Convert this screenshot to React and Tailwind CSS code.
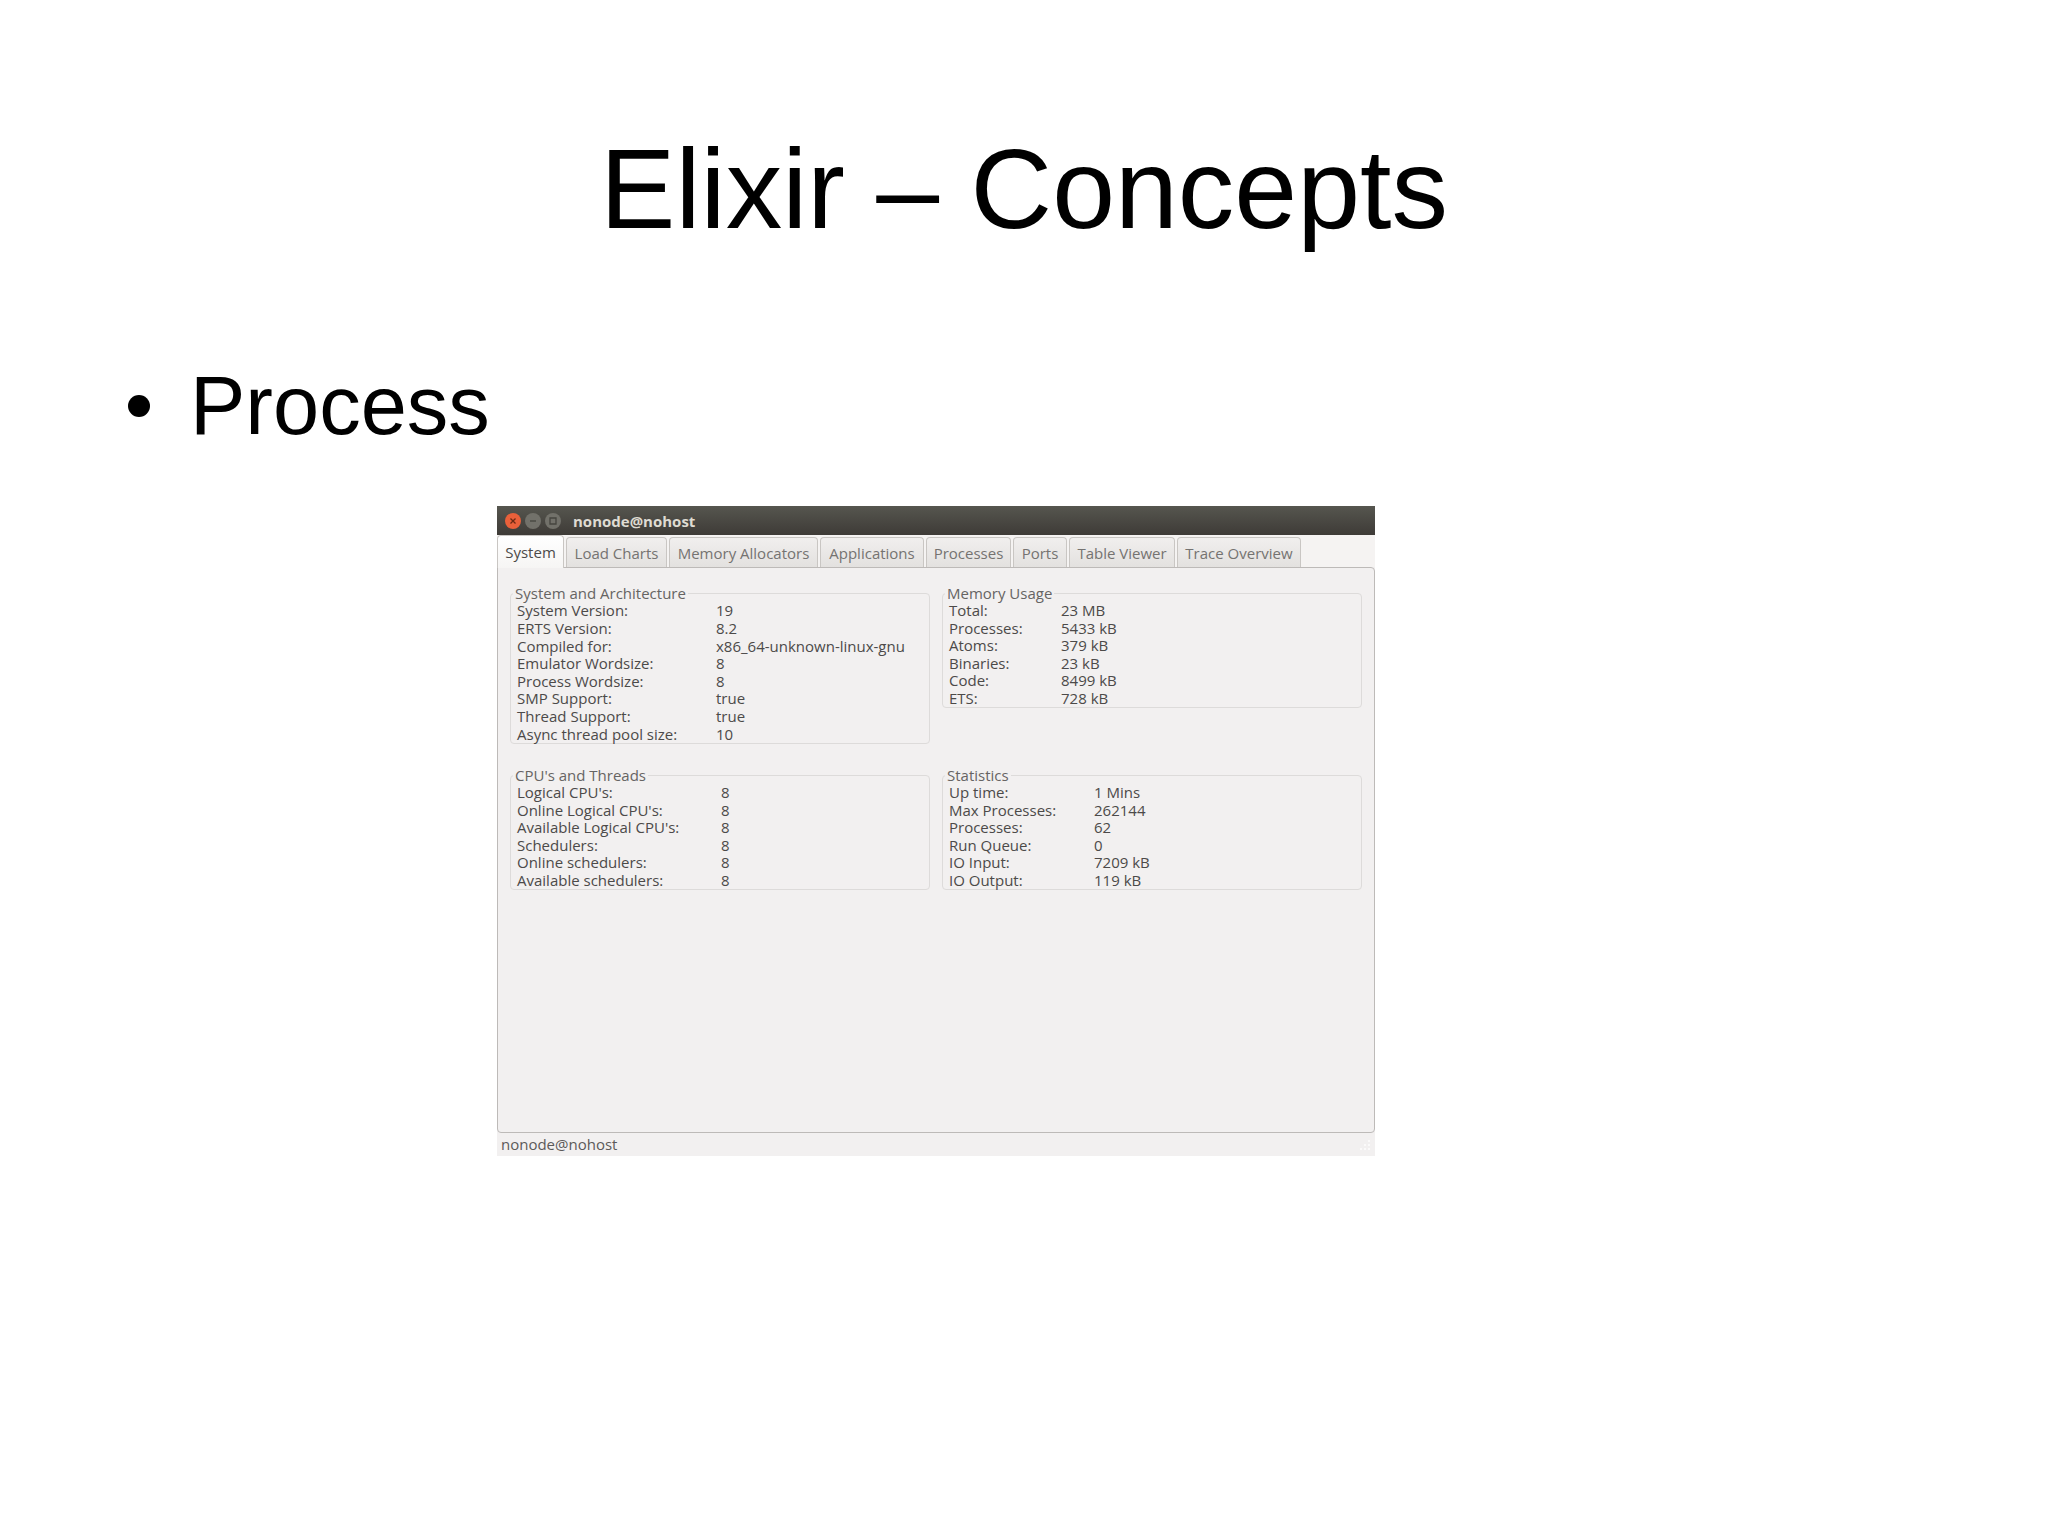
import { useState } from 'react'

const tabs = [
  { name: 'System', width: 'w-[67px]' },
  { name: 'Load Charts', width: 'w-[101px]' },
  { name: 'Memory Allocators', width: 'w-[149px]' },
  { name: 'Applications', width: 'w-[104px]' },
  { name: 'Processes', width: 'w-[85px]' },
  { name: 'Ports', width: 'w-[54px]' },
  { name: 'Table Viewer', width: 'w-[106px]' },
  { name: 'Trace Overview', width: 'w-[124px]' },
]

const groups = [
  {
    title: 'System and Architecture',
    labelWidth: 'w-[199px]',
    height: 'h-[141px]',
    rows: [
      ['System Version:', '19'],
      ['ERTS Version:', '8.2'],
      ['Compiled for:', 'x86_64-unknown-linux-gnu'],
      ['Emulator Wordsize:', '8'],
      ['Process Wordsize:', '8'],
      ['SMP Support:', 'true'],
      ['Thread Support:', 'true'],
      ['Async thread pool size:', '10'],
    ],
  },
  {
    title: 'Memory Usage',
    labelWidth: 'w-[112px]',
    height: 'h-[105px]',
    rows: [
      ['Total:', '23 MB'],
      ['Processes:', '5433 kB'],
      ['Atoms:', '379 kB'],
      ['Binaries:', '23 kB'],
      ['Code:', '8499 kB'],
      ['ETS:', '728 kB'],
    ],
  },
  {
    title: "CPU's and Threads",
    labelWidth: 'w-[204px]',
    height: 'h-[105px]',
    rows: [
      ["Logical CPU's:", '8'],
      ["Online Logical CPU's:", '8'],
      ["Available Logical CPU's:", '8'],
      ['Schedulers:', '8'],
      ['Online schedulers:', '8'],
      ['Available schedulers:', '8'],
    ],
  },
  {
    title: 'Statistics',
    labelWidth: 'w-[145px]',
    height: 'h-[105px]',
    rows: [
      ['Up time:', '1 Mins'],
      ['Max Processes:', '262144'],
      ['Processes:', '62'],
      ['Run Queue:', '0'],
      ['IO Input:', '7209 kB'],
      ['IO Output:', '119 kB'],
    ],
  },
]

function WindowButton({ label, color, children }) {
  return (
    <button aria-label={label} className={`size-4 rounded-full ${color}`}>
      <svg viewBox="0 0 16 16" className="size-4" fill="none" strokeWidth="1.3">
        {children}
      </svg>
    </button>
  )
}

function TitleBar() {
  return (
    <div className="flex h-[29px] items-center gap-1 bg-linear-to-b from-[#56564f] to-[#3e3b37] px-2">
      <WindowButton label="Close" color="bg-[#e9603a]">
        <path d="M5.5 5.5l5 5M10.5 5.5l-5 5" stroke="#6b2a14" />
      </WindowButton>
      <WindowButton label="Minimize" color="bg-[#72716a]">
        <path d="M5 8h6" stroke="#45443f" />
      </WindowButton>
      <WindowButton label="Maximize" color="bg-[#72716a]">
        <path d="M5 5h6v6H5z" stroke="#45443f" />
      </WindowButton>
      <span className="ml-2 text-[15px] leading-[18px] font-bold text-[#dfdbd2]">nonode@nohost</span>
    </div>
  )
}

function InfoGroup({ group }) {
  return (
    <fieldset className="min-w-0 self-start rounded-sm border border-[#dddbda] pl-1.5">
      <legend className="-ml-1 bg-[#f2f0f0] px-0.5 leading-[18px] text-[#666463]">{group.title}</legend>
      <table className={`w-full table-fixed ${group.height}`}>
        <tbody>
          {group.rows.map(([label, value]) => (
            <tr key={label}>
              <th scope="row" className={`p-0 text-left font-normal whitespace-nowrap ${group.labelWidth}`}>
                {label}
              </th>
              <td className="p-0 whitespace-nowrap">{value}</td>
            </tr>
          ))}
        </tbody>
      </table>
    </fieldset>
  )
}

function ObserverWindow() {
  const [active, setActive] = useState('System')

  return (
    <section className="col-start-2 bg-[#f2f0f0] font-['Open_Sans','Noto_Sans',sans-serif] text-[15px] leading-[17px] text-[#4c4a49]">
      <TitleBar />
      <div role="tablist" className="flex h-8 items-end gap-0.5 bg-[#f5f3f2]">
        {tabs.map(tab => (
          <button
            key={tab.name}
            role="tab"
            aria-selected={active === tab.name}
            onClick={() => setActive(tab.name)}
            className={`shrink-0 rounded-t border border-b-0 border-[#c9c6c3] bg-linear-to-b whitespace-nowrap ${tab.width} ${
              active === tab.name
                ? 'z-10 -mb-px h-[33px] from-white to-[#f6f5f4] text-[#4c4a49]'
                : 'h-[30px] from-[#f1efee] to-[#e3e1df] pt-0.5 text-[#757371]'
            }`}
          >
            {tab.name}
          </button>
        ))}
      </div>
      <div className="rounded-tr rounded-b border border-[#bdbab8] px-3 pt-4 pb-[242px]">
        <div className="grid grid-cols-2 gap-x-3 gap-y-[22px]">
          {groups.map(group => (
            <InfoGroup key={group.title} group={group} />
          ))}
        </div>
      </div>
      <footer className="flex h-[23px] items-center justify-between px-1 text-[#5c5a59]">
        <span>nonode@nohost</span>
        <svg viewBox="0 0 12 12" className="size-3" fill="#fbfafa">
          <path d="M9 1h2v2H9zM9 5h2v2H9zM9 9h2v2H9zM5 5h2v2H5zM5 9h2v2H5zM1 9h2v2H1z" />
        </svg>
      </footer>
    </section>
  )
}

export default function App() {
  return (
    <main className="min-h-screen bg-white pt-[133px] font-['Liberation_Sans',Arial,sans-serif] text-black">
      <h1 className="text-center text-[113px] leading-none">Elixir – Concepts</h1>
      <ul className="mt-[118px] pl-32">
        <li className="flex items-center gap-10 text-[83px] leading-none">
          <span className="size-[22px] rounded-full bg-black" />
          Process
        </li>
      </ul>
      <div className="mt-[59px] grid grid-cols-[497fr_878fr_673fr]">
        <ObserverWindow />
      </div>
    </main>
  )
}
